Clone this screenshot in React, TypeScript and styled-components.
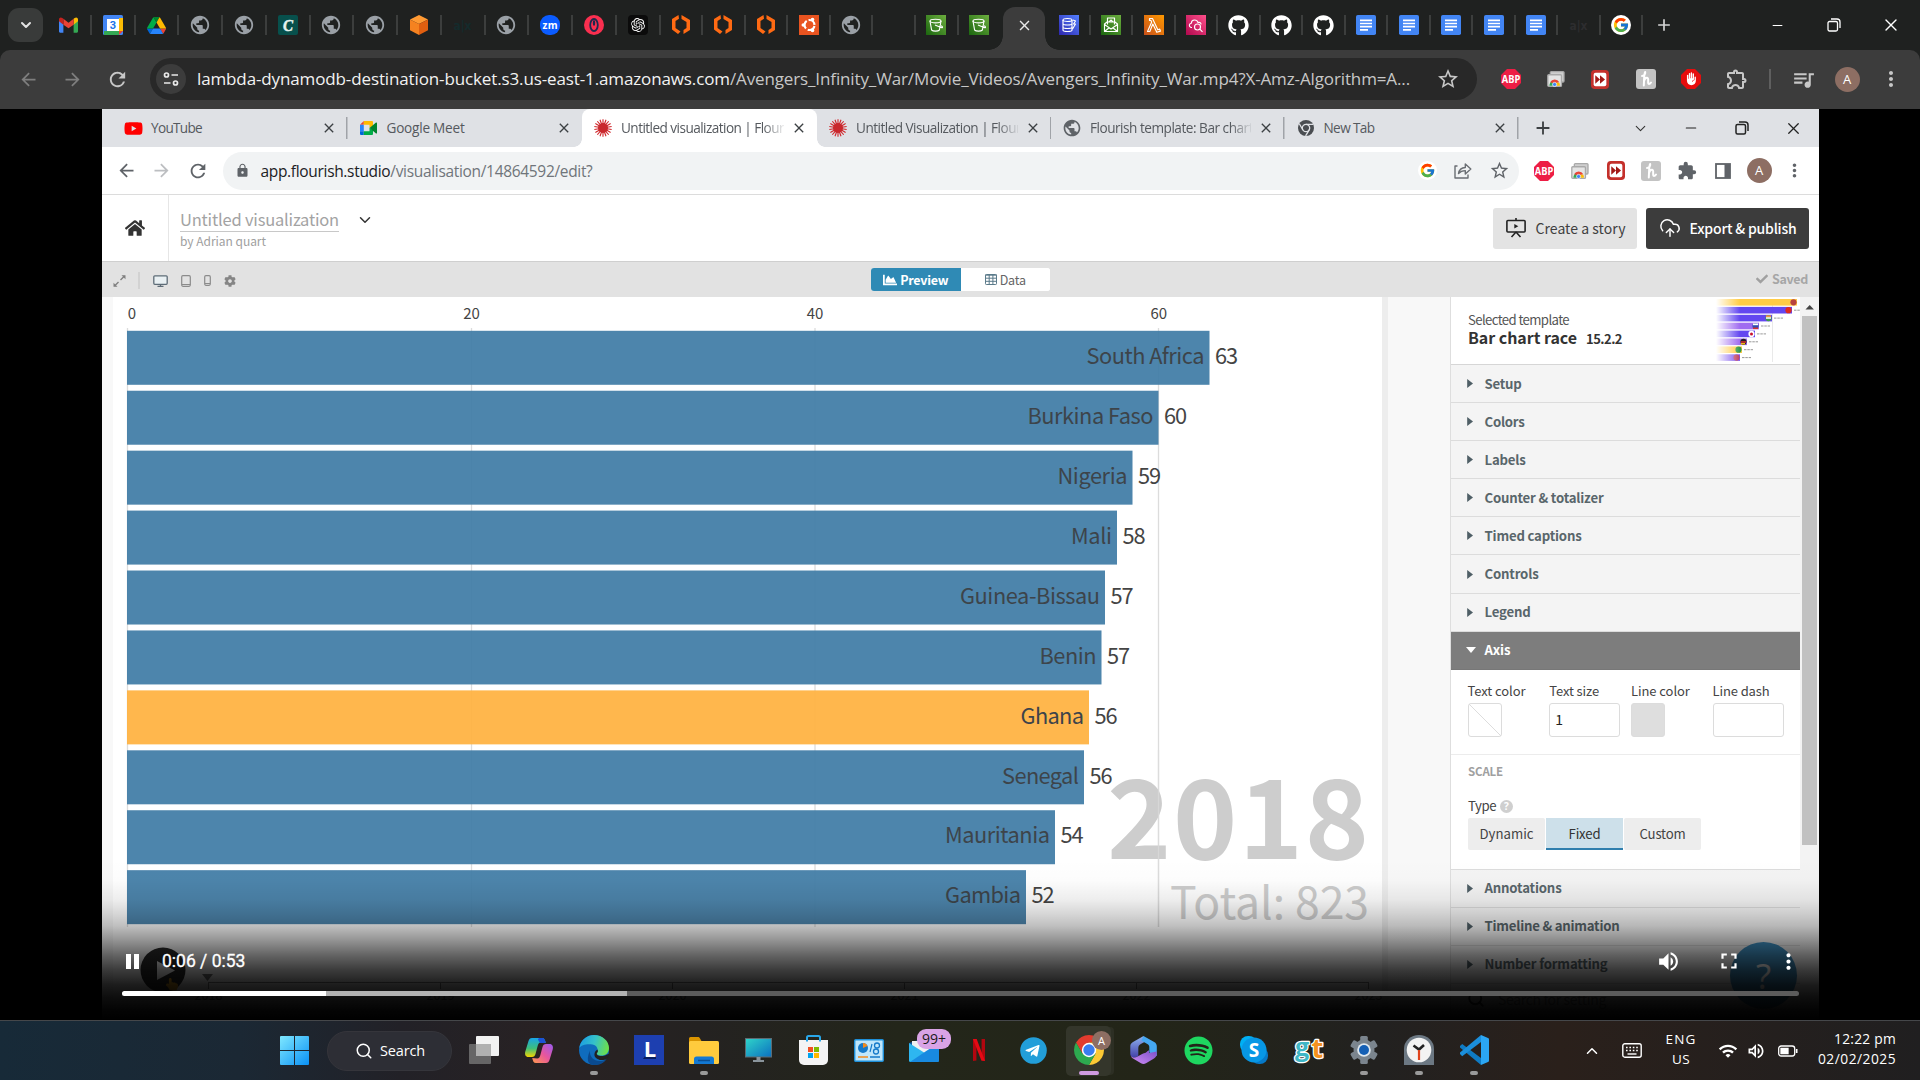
import React, { useLayoutEffect, useRef, useState } from "react";
import styled, { createGlobalStyle, css } from "styled-components";
import { MdPublic, MdStarBorder, MdOutlineExtension, MdExtension, MdQueueMusic, MdVolumeUp, MdFullscreen, MdMoreVert, MdLock, MdArrowBack, MdArrowForward, MdRefresh, MdClose, MdAdd, MdWifi, MdOutlineVolumeUp, MdFrontHand } from "react-icons/md";
import { FaGithub, FaSpotify, FaTelegramPlane, FaHome, FaCog, FaChartArea, FaCheck, FaYoutube, FaHandPointUp } from "react-icons/fa";
import { FcGoogle } from "react-icons/fc";
import { SiOpenai } from "react-icons/si";
import { ChevronDown, ChevronUp, CloudUpload, Search, Minus, X } from "lucide-react";

const SANS = '"Open Sans", "Noto Sans", sans-serif';
const SOURCE = '"Noto Sans CJK SC", "Noto Sans", sans-serif';

const Global = createGlobalStyle`
  * { box-sizing: border-box; }
  html, body { margin: 0; padding: 0; background: #000; }
  body { width: 1920px; height: 1080px; overflow: hidden; font-family: ${SANS}; }
  svg { display: block; flex: none; overflow: visible; }
`;

/* ---------- text ---------- */

const Label = styled.span<{ $size: number; $color: string; $bold?: number; $source?: boolean; $lift?: number }>`
  display: inline-block;
  flex: none;
  width: max-content;
  white-space: nowrap;
  font-family: ${(p) => (p.$source ? SOURCE : SANS)};
  font-size: ${(p) => p.$size}px;
  font-weight: ${(p) => p.$bold ?? 400};
  line-height: 20px;
  color: ${(p) => p.$color};
  margin-bottom: ${(p) => p.$lift ?? 0}px;
`;

type TextProps = {
  width: number;
  size: number;
  color: string;
  bold?: number;
  source?: boolean;
  lift?: number;
  children: React.ReactNode;
};

/* Tracks its letters so that the line spans the given width. */
function Text({ width, size, color, bold, source, lift, children }: TextProps) {
  const ref = useRef<HTMLSpanElement>(null);
  const [spacing, setSpacing] = useState(0);
  useLayoutEffect(() => {
    const el = ref.current;
    if (!el) return;
    el.style.letterSpacing = "0px";
    const natural = el.getBoundingClientRect().width;
    const count = (el.textContent ?? "").length || 1;
    const next = (width - natural) / count;
    el.style.letterSpacing = `${next}px`;
    setSpacing(next);
  }, [width, size]);
  return (
    <Label ref={ref} $size={size} $color={color} $bold={bold} $source={source} $lift={lift} style={{ letterSpacing: spacing }}>
      {children}
    </Label>
  );
}

/* ---------- outer browser ---------- */

const Desktop = styled.div`
  display: flex;
  flex-direction: column;
  width: 1920px;
  height: 1080px;
  background: #000;
`;

const TabStrip = styled.div`
  display: flex;
  align-items: center;
  height: 50px;
  background: #1f2120;
`;

const TabSearch = styled.div`
  display: flex;
  align-items: center;
  justify-content: center;
  width: 35px;
  height: 34px;
  margin: 0 5px 0 8px;
  border-radius: 11px;
  background: #393b3a;
  color: #e3e3e3;
`;

const TabCell = styled.div<{ $w: number; $line?: boolean }>`
  display: flex;
  flex: none;
  align-items: center;
  justify-content: center;
  width: ${(p) => p.$w}px;
  height: 20px;
  border-right: 2px solid ${(p) => (p.$line === false ? "transparent" : "#3c3e3d")};
`;

const ActiveTab = styled.div`
  display: flex;
  flex: none;
  align-self: flex-end;
  align-items: center;
  justify-content: center;
  position: relative;
  width: 42px;
  height: 43px;
  margin: 0 3px 0 2px;
  border-radius: 12px 12px 0 0;
  background: #3c3c3c;
  color: #e8e8e8;
  padding-bottom: 7px;
  &::before, &::after {
    content: "";
    position: absolute;
    bottom: 0;
    width: 14px;
    height: 14px;
  }
  &::before { left: -14px; background: radial-gradient(circle at 0 0, transparent 13.5px, #3c3c3c 14px); }
  &::after { right: -14px; background: radial-gradient(circle at 100% 0, transparent 13.5px, #3c3c3c 14px); }
`;

const WindowButtons = styled.div`
  display: flex;
  align-items: center;
  margin-left: auto;
  color: #fff;
`;

const Slot = styled.div<{ $w: number; $color?: string }>`
  display: flex;
  flex: none;
  align-items: center;
  justify-content: center;
  width: ${(p) => p.$w}px;
  color: ${(p) => p.$color ?? "inherit"};
`;

const ToolbarBack = styled.div`
  height: 59px;
  background: #1f2120;
`;

const Toolbar = styled.div`
  display: flex;
  align-items: center;
  height: 59px;
  padding: 0 6px 1px 6px;
  border-radius: 10px 10px 0 0;
  background: #3c3c3c;
  color: #c7c7c7;
`;

const Omnibox = styled.div`
  display: flex;
  align-items: center;
  width: 1327px;
  height: 42px;
  margin-left: 10px;
  padding: 0 14px 0 6px;
  border-radius: 21px;
  background: #282828;
`;

const SiteInfo = styled.div`
  display: flex;
  align-items: center;
  justify-content: center;
  width: 30px;
  height: 30px;
  margin-right: 11px;
  border-radius: 50%;
  background: #3c3c3c;
`;

const Dim = styled.span<{ $c: string }>`
  color: ${(p) => p.$c};
`;

const Push = styled.div`
  margin-left: auto;
`;

const Avatar = styled.div`
  display: flex;
  align-items: center;
  justify-content: center;
  width: 25px;
  height: 25px;
  border-radius: 50%;
  background: #8d6e63;
  color: #fff;
  font: 400 13px/25px ${SANS};
`;

const Divider = styled.div<{ $h: number; $c: string }>`
  width: 2px;
  height: ${(p) => p.$h}px;
  background: ${(p) => p.$c};
`;

/* ---------- video ---------- */

const Stage = styled.div`
  display: flex;
  justify-content: flex-start;
  height: 911px;
  padding-left: 102px;
  background: #000;
`;

const Video = styled.div`
  position: relative;
  display: flex;
  flex-direction: column;
  width: 1717px;
  height: 911px;
  background: #fff;
  overflow: hidden;
`;

const InnerStrip = styled.div`
  display: flex;
  height: 38px;
  padding-left: 10px;
  background: #dfe1e5;
`;

const InnerTab = styled.div<{ $w: number; $active?: boolean; $line?: boolean }>`
  display: flex;
  flex: none;
  align-items: center;
  position: relative;
  width: ${(p) => p.$w}px;
  padding: 0 10.5px 0 10px;
  gap: 7px;
  color: #3c4043;
  ${(p) => p.$line && css`background: linear-gradient(#a0a3a8, #a0a3a8) right center / 1.5px 22px no-repeat;`}
  ${(p) =>
    p.$active &&
    css`
      background: #fff;
      border-radius: 8px 8px 0 0;
      &::before, &::after { content: ""; position: absolute; bottom: 0; width: 8px; height: 8px; }
      &::before { left: -8px; background: radial-gradient(circle at 0 0, transparent 7.5px, #fff 8px); }
      &::after { right: -8px; background: radial-gradient(circle at 100% 0, transparent 7.5px, #fff 8px); }
    `}
`;

const TabTitle = styled.div<{ $fade?: boolean }>`
  display: flex;
  flex: 1;
  min-width: 0;
  ${(p) => p.$fade && css`mask-image: linear-gradient(90deg, #000 87%, rgba(0, 0, 0, 0.1) 100%);`}
`;

const InnerBar = styled.div`
  display: flex;
  align-items: center;
  height: 48px;
  padding: 0 7px;
  border-bottom: 1px solid #dcdcdc;
  color: #5f6368;
`;

const InnerOmnibox = styled.div`
  display: flex;
  align-items: center;
  width: 1296px;
  height: 38px;
  margin-left: 7px;
  margin-right: 7px;
  padding: 0 2px 0 9px;
  border-radius: 19px;
  background: #f1f3f4;
`;

const Header = styled.div`
  display: flex;
  align-items: center;
  height: 67px;
  padding-right: 10px;
  border-bottom: 1px solid #cfcfcf;
  background: #fff;
`;

const HomeCell = styled.div`
  display: flex;
  align-items: center;
  justify-content: center;
  width: 67px;
  height: 66px;
  border-right: 1px solid #e6e6e6;
  color: #333;
`;

const TitleBlock = styled.div`
  display: flex;
  flex-direction: column;
  align-items: flex-start;
  align-self: flex-start;
  margin-left: 11px;
  margin-right: 17px;
  padding-top: 13.5px;
`;

const TitleLine = styled.div`
  flex: none;
  height: 23px;
  margin-bottom: -1px;
  border-bottom: 1px solid #c8c8c8;
`;

const TitleMenu = styled.div`
  padding-bottom: 16px;
  color: #333;
`;

const HeaderButton = styled.div<{ $w: number; $dark?: boolean }>`
  display: flex;
  align-items: center;
  gap: ${(p) => (p.$dark ? 9 : 10)}px;
  width: ${(p) => p.$w}px;
  height: 41px;
  padding-left: 12.5px;
  border-radius: 3px;
  background: ${(p) => (p.$dark ? "#3c3c3c" : "#e3e3e3")};
  color: ${(p) => (p.$dark ? "#fff" : "#333")};
`;

const ButtonRow = styled.div`
  display: flex;
  gap: 9px;
  margin-left: auto;
`;

const SubBar = styled.div`
  display: grid;
  grid-template-columns: 769px 179px 1fr;
  align-items: center;
  height: 35px;
  background: #e2e2e2;
  color: #858585;
`;

const SubLeft = styled.div`
  display: flex;
  align-items: center;
  padding: 2px 0 0 6px;
`;

const Switch = styled.div`
  display: flex;
  height: 23px;
  border-radius: 3px;
  overflow: hidden;
  background: #fff;
`;

const SwitchHalf = styled.div<{ $on?: boolean }>`
  display: flex;
  align-items: center;
  justify-content: center;
  gap: 3px;
  width: 50%;
  background: ${(p) => (p.$on ? "#2f8ab5" : "#fff")};
  color: ${(p) => (p.$on ? "#fff" : "#5b7a8a")};
`;

const SavedCell = styled.div`
  display: flex;
  align-items: center;
  justify-content: flex-end;
  gap: 4px;
  padding-right: 11px;
  padding-bottom: 1px;
  color: #a0a0a0;
`;

const Body = styled.div`
  display: flex;
  height: 723px;
  background: #f8f8f8;
`;

const Margin = styled.div<{ $w: number; $c: string }>`
  flex: none;
  width: ${(p) => p.$w}px;
  background: ${(p) => p.$c};
`;

const ChartPane = styled.div`
  width: 1269px;
  background: #fff;
`;

const Sidebar = styled.div`
  display: flex;
  flex-direction: column;
  width: 350px;
  border-left: 1px solid #dedede;
  background: #fff;
`;

const TemplateCard = styled.div`
  display: flex;
  flex: none;
  justify-content: space-between;
  height: 68px;
  padding-left: 17px;
  border-bottom: 1px solid #d6d6d6;
`;

const TemplateText = styled.div`
  display: flex;
  flex-direction: column;
  padding-top: 12.5px;
`;

const TitlePair = styled.div`
  display: flex;
  align-items: baseline;
  gap: 9px;
  margin-top: -3px;
`;

const Section = styled.div<{ $open?: boolean }>`
  display: flex;
  flex: none;
  align-items: center;
  gap: 8.5px;
  height: 38.1px;
  padding-left: 15px;
  border-bottom: 1px solid ${(p) => (p.$open ? "#777" : "#dcdcdc")};
  background: ${(p) => (p.$open ? "#7d7d7d" : "#f4f4f4")};
`;

const Fields = styled.div`
  display: grid;
  grid-template-columns: repeat(4, 81.7px);
  flex: none;
  height: 85.5px;
  padding: 11.5px 0 0 16.5px;
  border-bottom: 1px solid #ececec;
`;

const Field = styled.div`
  display: flex;
  flex-direction: column;
  gap: 1.5px;
`;

const Swatch = styled.div<{ $fill?: string }>`
  width: 34px;
  height: 34px;
  border: 1px solid #dcdcdc;
  border-radius: 3px;
  background: ${(p) => p.$fill ?? "linear-gradient(45deg, #fff 49.2%, #ddd 49.5%, #ddd 50.5%, #fff 50.8%)"};
`;

const Input = styled.div`
  display: flex;
  align-items: center;
  width: 71px;
  height: 34px;
  padding-left: 5px;
  padding-bottom: 1px;
  border: 1px solid #dcdcdc;
  border-radius: 3px;
  background: #fff;
`;

const Scale = styled.div`
  display: flex;
  flex: none;
  flex-direction: column;
  height: 114.5px;
  padding: 6px 0 0 17px;
  border-bottom: 1px solid #dcdcdc;
`;

const TypeLine = styled.div`
  display: flex;
  align-items: center;
  gap: 4px;
  margin: 15px 0 2px;
`;

const Question = styled.div`
  width: 13px;
  height: 13px;
  border-radius: 50%;
  background: #cfcfcf;
  color: #fff;
  font: 700 10px/13px ${SANS};
  text-align: center;
`;

const Options = styled.div`
  display: flex;
  gap: 1px;
`;

const Option = styled.div<{ $on?: boolean }>`
  display: flex;
  align-items: center;
  justify-content: center;
  width: 77px;
  height: 32px;
  padding-bottom: 1px;
  border-radius: ${(p) => (p.$on ? 0 : "2px")};
  background: ${(p) => (p.$on ? "#cde0ea" : "#ededed")};
  box-shadow: ${(p) => (p.$on ? "inset 0 -2px 0 #2f7fae" : "none")};
`;

const SearchLine = styled.div`
  display: flex;
  align-items: center;
  gap: 13px;
  height: 30px;
  padding-left: 16px;
`;

const ScrollTrack = styled.div`
  display: flex;
  flex-direction: column;
  align-items: flex-start;
  width: 19px;
  padding: 7px 0 0 2px;
  background: #f3f3f3;
`;

const ScrollThumb = styled.div`
  width: 15px;
  height: 529px;
  margin-top: 6px;
  background: #c1c1c1;
`;

const HelpBubble = styled.div`
  position: absolute;
  right: 22px;
  bottom: 11px;
  display: flex;
  align-items: center;
  justify-content: center;
  width: 67px;
  height: 67px;
  border-radius: 50%;
  background: #3f8fc0;
  color: #fff;
  font: 400 35px/67px ${SANS};
`;

const Shade = styled.div`
  position: absolute;
  left: 0;
  right: 0;
  bottom: 0;
  height: 160px;
  background: linear-gradient(
    rgba(0, 0, 0, 0) 0px, rgba(0, 0, 0, 0.01) 20px, rgba(0, 0, 0, 0.07) 40px, rgba(0, 0, 0, 0.16) 54px,
    rgba(0, 0, 0, 0.25) 66px, rgba(0, 0, 0, 0.42) 80px, rgba(0, 0, 0, 0.62) 96px, rgba(0, 0, 0, 0.77) 110px,
    rgba(0, 0, 0, 0.89) 125px, rgba(0, 0, 0, 0.95) 138px, rgba(0, 0, 0, 0.985) 150px, #000 160px
  );
`;

const Controls = styled.div`
  position: absolute;
  left: 20px;
  right: 20px;
  bottom: 24px;
  display: flex;
  flex-direction: column;
  gap: 16px;
  color: #fff;
`;

const ControlRow = styled.div`
  display: flex;
  align-items: center;
  height: 28px;
`;

const Time = styled.div`
  margin-left: 20px;
  font: 400 17.5px/28px Roboto, "Liberation Sans", sans-serif;
  -webkit-text-stroke: 0.3px #fff;
`;

const Track = styled.div`
  display: flex;
  height: 5px;
  border-radius: 3px;
  overflow: hidden;
  background: #5c5c5c;
`;

const TrackPart = styled.div<{ $c: string }>`
  background: ${(p) => p.$c};
`;

/* ---------- taskbar ---------- */

const Taskbar = styled.div`
  display: flex;
  align-items: center;
  height: 60px;
  padding-left: 280px;
  border-top: 1px solid #45474a;
  background: linear-gradient(90deg, #172a38 0, #1b2834 240px, #222127 400px, #292223 560px, #242221 700px, #23261a 900px, #232518 1150px, #222120 1380px, #2a201b 1560px, #201f20 1920px);
`;

const SearchPill = styled.div`
  display: flex;
  align-items: center;
  gap: 7px;
  width: 125px;
  height: 40px;
  margin: 0 4px 0 18px;
  padding-left: 27px;
  border: 1px solid #35353b;
  border-radius: 20px;
  background: #2d2e35;
  color: #fff;
`;

const TaskItem = styled.div<{ $on?: boolean }>`
  position: relative;
  display: flex;
  flex: none;
  align-items: center;
  justify-content: center;
  width: ${(p) => (p.$on ? 45 : 55)}px;
  height: ${(p) => (p.$on ? 50 : 59)}px;
  margin: 0 ${(p) => (p.$on ? 5 : 0)}px;
  padding-bottom: 1px;
  border-radius: 5px;
  background: ${(p) => (p.$on ? "#34362b" : "transparent")};
  box-shadow: ${(p) => (p.$on ? "4px 0 0 -1px #2d2f24" : "none")};
`;

const Running = styled.div<{ $w: number; $c: string }>`
  position: absolute;
  bottom: ${(p) => (p.$w > 10 ? 1 : 5)}px;
  width: ${(p) => p.$w}px;
  height: 4px;
  border-radius: 2px;
  background: ${(p) => p.$c};
`;

const Badge = styled.div`
  position: absolute;
  top: 8px;
  left: 21px;
  width: 34px;
  height: 20px;
  border-radius: 9px;
  background: #d9a3e6;
  color: #1a1a1a;
  font: 400 14px/20px ${SANS};
  text-align: center;
`;

const Initial = styled.div`
  position: absolute;
  top: 5px;
  right: 0;
  width: 19px;
  height: 19px;
  border-radius: 50%;
  background: #8d6e63;
  color: #fff;
  font: 400 11px/19px ${SANS};
  text-align: center;
`;

const Tray = styled.div`
  display: flex;
  align-items: center;
  margin-left: auto;
  padding-right: 24px;
  color: #fff;
`;

const Stack = styled.div<{ $w: number; $end?: boolean }>`
  display: flex;
  flex-direction: column;
  align-items: ${(p) => (p.$end ? "flex-end" : "center")};
  width: ${(p) => p.$w}px;
  padding-bottom: 3px;
`;

/* ---------- icons ---------- */

const Gmail = () => (
  <svg width="19" height="16" viewBox="0 0 52 42">
    <path d="M0 6v33a3 3 0 0 0 3 3h9V18z" fill="#4285f4" />
    <path d="M40 18v24h9a3 3 0 0 0 3-3V6z" fill="#34a853" />
    <path d="M40 4v16l12-9V6c0-5-5-7-9-4z" fill="#fbbc04" />
    <path d="M12 20V4l14 10.500L40 4v16L26 30z" fill="#ea4335" />
    <path d="M0 6v5l12 9V4L9 2C5-1 0 1 0 6z" fill="#c5221f" />
  </svg>
);
const Calendar = () => (
  <svg width="20" height="20" viewBox="0 0 20 20">
    <rect width="20" height="20" rx="1.500" fill="#4285f4" />
    <rect x="16" y="3" width="4" height="13" fill="#fbbc04" />
    <rect x="1" y="16" width="15" height="4" fill="#34a853" />
    <path d="M16 16h4l-4 4z" fill="#ea4335" />
    <rect x="4" y="4" width="12" height="12" fill="#fff" />
    <text x="10" y="14" fontFamily="Roboto" fontSize="11" fontWeight="700" textAnchor="middle" fill="#1a73e8">3</text>
  </svg>
);
const Drive = () => (
  <svg width="19" height="17" viewBox="0 0 87 78">
    <path d="M6.600 66.850l3.850 6.650c.8 1.400 1.950 2.500 3.300 3.300L27.500 53H0c0 1.550.4 3.100 1.200 4.500z" fill="#0066da" />
    <path d="M43.650 25L29.900 1.200c-1.350.8-2.500 1.900-3.300 3.300l-25.400 44A9 9 0 0 0 0 53h27.500z" fill="#00ac47" />
    <path d="M73.550 76.800c1.350-.8 2.500-1.900 3.300-3.300l9.250-16c.8-1.400 1.200-2.950 1.200-4.500H59.800l5.850 11.500z" fill="#ea4335" />
    <path d="M43.650 25L57.400 1.200C56.050.4 54.500 0 52.900 0H34.400c-1.600 0-3.150.45-4.500 1.200z" fill="#00832d" />
    <path d="M59.800 53H27.500L13.750 76.800c1.350.8 2.900 1.200 4.500 1.200h50.800c1.600 0 3.150-.45 4.500-1.200z" fill="#2684fc" />
    <path d="M73.400 26.500l-12.700-22c-.8-1.400-1.950-2.500-3.300-3.300L43.650 25 59.800 53h27.450c0-1.550-.4-3.100-1.200-4.500z" fill="#ffba00" />
  </svg>
);
const Copper = () => (
  <svg width="20" height="20" viewBox="0 0 20 20">
    <rect width="20" height="20" rx="2" fill="#07504c" />
    <text x="10" y="15.500" fontFamily="Liberation Serif" fontStyle="italic" fontWeight="700" fontSize="17" textAnchor="middle" textLength="10" lengthAdjust="spacingAndGlyphs" stroke="#e6f4f0" strokeWidth=".5" fill="#e6f4f0">C</text>
  </svg>
);
const Cube = () => (
  <svg width="20" height="20" viewBox="0 0 20 20">
    <path d="M10 0l9 4.500L10 9 1 4.500z" fill="#ff9a33" />
    <path d="M1 4.500L10 9v11l-9-4.700z" fill="#f58220" />
    <path d="M19 4.500L10 9v11l9-4.700z" fill="#e05f10" />
  </svg>
);
const Alx = ({ c }: { c: string }) => (
  <svg width="19" height="16" viewBox="0 0 19 16">
    <text x="9.500" y="13" fontFamily="DejaVu Sans" fontWeight="700" fontSize="13" textLength="18" lengthAdjust="spacingAndGlyphs" textAnchor="middle" fill={c}>a|x</text>
  </svg>
);
const Zoom = () => (
  <svg width="20" height="20" viewBox="0 0 20 20">
    <rect width="20" height="20" rx="9" fill="#0b5cff" />
    <text x="10" y="13.500" fontFamily="Open Sans" fontWeight="700" fontSize="10" textAnchor="middle" textLength="15" fill="#fff">zm</text>
  </svg>
);
const Opera = () => (
  <svg width="20" height="20" viewBox="0 0 20 20">
    <circle cx="10" cy="10" r="10" fill="#fa2f4f" />
    <ellipse cx="10" cy="10" rx="3.800" ry="6" fill="none" stroke="#1c2a4d" strokeWidth="1.800" />
    <ellipse cx="10" cy="8" rx="1.200" ry="3" fill="#1c2a4d" />
  </svg>
);
const Gpt = () => (
  <svg width="20" height="20" viewBox="0 0 20 20">
    <rect width="20" height="20" rx="4" fill="#0b0b0b" />
    <g transform="translate(3 3)"><SiOpenai size={14} color="#fff" /></g>
  </svg>
);
const Brackets = () => (
  <svg width="20" height="20" viewBox="0 0 20 20" fill="#ff6a13">
    <path d="M7.500 0L1 4v10.500l6 4.500 2.500-2.500-5-3.500V6l3.500-2.200z" />
    <path d="M10.500 0L19 5v10l-6.500 4v-4l3-2V7l-5-3z" />
  </svg>
);
const Ubuntu = () => (
  <svg width="20" height="20" viewBox="0 0 20 20">
    <rect width="20" height="20" fill="#e95420" />
    <circle cx="10.500" cy="10" r="5" fill="none" stroke="#fff" strokeWidth="2.200" strokeDasharray="8.500 2" strokeDashoffset="-1" />
    <circle cx="4.300" cy="10" r="1.800" fill="#fff" />
    <circle cx="13.500" cy="4.600" r="1.800" fill="#fff" />
    <circle cx="13.500" cy="15.400" r="1.800" fill="#fff" />
  </svg>
);
const AwsTile = ({ a, b, id, children }: { a: string; b: string; id: string; children: React.ReactNode }) => (
  <svg width="20" height="20" viewBox="0 0 20 20">
    <defs>
      <linearGradient id={id} x1="0" y1="1" x2="1" y2="0"><stop stopColor={a} /><stop offset="1" stopColor={b} /></linearGradient>
    </defs>
    <rect width="20" height="20" fill={`url(#${id})`} />
    <g fill="none" stroke="#fff" strokeWidth="1.150" strokeLinejoin="round">{children}</g>
  </svg>
);
const Bucket = () => (
  <AwsTile a="#1b660f" b="#6cae3e" id="s3">
    <ellipse cx="9.500" cy="6" rx="5.500" ry="1.800" />
    <path d="M4 6l1.600 9c1.500 1.400 6.300 1.400 7.800 0L15 6M9 10l6 2.500c2 .6 2-1 0-1.800" />
  </AwsTile>
);
const Dynamo = () => (
  <AwsTile a="#2e27ad" b="#527fff" id="dy">
    <ellipse cx="8.500" cy="5" rx="4.500" ry="1.500" />
    <path d="M4 5v10c0 2 9 2 9 0V5M4 8.500c0 2 9 2 9 0M4 12c0 2 9 2 9 0M14 5l2.500 1-2 3h2l-3 5" />
  </AwsTile>
);
const Ses = () => (
  <AwsTile a="#1b660f" b="#6cae3e" id="se">
    <path d="M3.500 9l2.500-2h8l2.500 2v7.500h-13zM3.500 9.500l6.500 4.500 6.500-4.500M6.500 9.500V3h7v6.500M8 7l2-2 2 2M3.500 16.500l5-4M16.500 16.500l-5-4" />
  </AwsTile>
);
const Lambda = () => (
  <AwsTile a="#c8511b" b="#ff9900" id="la">
    <path d="M5.500 3.500h3l5.300 11.300 2-.7.600 2-3.600 1.200L8.800 9 5.800 16.500H3.500L7.700 7l-.8-1.600H5.500z" />
  </AwsTile>
);
const CloudWatch = () => (
  <AwsTile a="#b0084d" b="#ff4f8b" id="cw">
    <path d="M6 12.500H5c-2.500-1-2-4 .3-4.200C5.500 4 11 4 12 7.500c2.500-.5 3 .8 3 2" />
    <circle cx="11.500" cy="12" r="3" /><path d="M13.800 14.200l2.700 2.600" />
  </AwsTile>
);
const Docs = () => (
  <svg width="20" height="20" viewBox="0 0 20 20">
    <rect width="20" height="20" rx="1.800" fill="#4285f4" />
    <path d="M4 5.300h12M4 8.500h12M4 11.700h12M4 14.900h8" stroke="#fff" strokeWidth="1.700" />
  </svg>
);
const GoogleDisc = ({ s = 20 }: { s?: number }) => (
  <svg width={s} height={s} viewBox="0 0 20 20">
    <circle cx="10" cy="10" r="10" fill="#fff" />
    <g transform="translate(1.5 1.5)"><FcGoogle size={17} /></g>
  </svg>
);
const Restore = ({ c, w = 1.300 }: { c: string; w?: number }) => (
  <svg width="14" height="14" viewBox="0 0 14 14" fill="none" stroke={c} strokeWidth={w}>
    <rect x="1" y="3.500" width="9.500" height="9.500" rx="1.500" />
    <path d="M4 1h6a3 3 0 0 1 3 3v6" />
  </svg>
);
const Tune = () => (
  <svg width="16" height="16" viewBox="0 0 16 16" fill="none" stroke="#e8e8e8" strokeWidth="1.700">
    <circle cx="3.500" cy="4" r="2" /><path d="M8.500 4H15M1 12h6.500" /><circle cx="12.500" cy="12" r="2" />
  </svg>
);
const Abp = () => (
  <svg width="20" height="20" viewBox="0 0 20 20">
    <path d="M6 0h8l6 6v8l-6 6H6l-6-6V6z" fill="#ed1e45" />
    <text x="10" y="13.700" fontFamily="Open Sans" fontWeight="700" fontSize="10.200" textAnchor="middle" textLength="18.500" lengthAdjust="spacingAndGlyphs" fill="#fff">ABP</text>
  </svg>
);
const Windows = () => (
  <svg width="18" height="16" viewBox="0 0 19 17">
    <rect x="3.500" y=".7" width="14.500" height="11" rx="1" fill="#cfcfcf" stroke="#a9a9a9" strokeWidth="1.400" />
    <rect x=".8" y="4" width="14.500" height="12.300" rx="1" fill="#e4e4e4" stroke="#a9a9a9" strokeWidth="1.400" />
    <path d="M2.500 15.600a5.500 5.500 0 0 1 3-5l2.500 5z" fill="#34a853" />
    <path d="M3.200 12a5.500 5.500 0 0 1 9.800 0l-5 1.200z" fill="#ea4335" />
    <path d="M8 12.600h5a5.400 5.400 0 0 1 .6 3H8z" fill="#fbbc04" />
    <circle cx="8" cy="14.300" r="2.200" fill="#4285f4" stroke="#fff" strokeWidth=".7" />
  </svg>
);
const FastForward = () => (
  <svg width="18" height="19" viewBox="0 0 19 20">
    <rect width="19" height="20" rx="4" fill="#c4302b" />
    <rect x="2.800" y="3" width="13.400" height="14" rx="2" fill="#fff" />
    <path d="M4.500 5.500L9.500 10l-5 4.500zM9.500 5.500l5.300 4.500-5.300 4.500z" fill="#a31916" />
  </svg>
);
const Honey = () => (
  <svg width="20" height="20" viewBox="0 0 20 20">
    <rect width="20" height="20" rx="3" fill="#c3c3c3" />
    <path d="M6 7c2.300-.5 3.500-2 3.200-4-1.300 1.500-1 8-1.400 13.500M8 12c.6-2 1.700-3.500 3.200-3.300 2.200.3-.2 6.300 1.800 6.300.8 0 1.500-.7 2-1.500" fill="none" stroke="#fff" strokeWidth="2" strokeLinecap="round" strokeLinejoin="round" />
  </svg>
);
const StopHand = () => (
  <svg width="20" height="20" viewBox="0 0 20 20">
    <path d="M6 0h8l6 6v8l-6 6H6l-6-6V6z" fill="#e60d0d" />
    <g transform="translate(3.500 3.200)"><MdFrontHand size={13} color="#fff" /></g>
  </svg>
);
const Meet = () => (
  <svg width="17" height="14" viewBox="0 0 17 14">
    <path d="M3.800 0v3.800H0z" fill="#ea4335" />
    <path d="M0 3.800h3.800v6.400H0z" fill="#2684fc" />
    <path d="M0 10.200h3.800V14H1a1 1 0 0 1-1-1z" fill="#0066da" />
    <path d="M3.800 0H12a1 1 0 0 1 1 1v4l-3.500 2V3.800H3.800z" fill="#ffba00" />
    <path d="M3.800 14H12a1 1 0 0 0 1-1V9L9.500 7v3.200H3.800z" fill="#00ac47" />
    <path d="M9.500 7L16 1.500c.4-.3 1 0 1 .5v10c0 .5-.6.800-1 .5z" fill="#00832d" />
  </svg>
);
const Burst = () => (
  <svg width="18" height="18" viewBox="-9 -9 18 18">
    {Array.from({ length: 18 }, (_, i) => (
      <path key={i} d="M0-4V-8.800" stroke="#d0262b" strokeWidth="1.100" transform={`rotate(${i * 20})`} />
    ))}
    <circle r="5" fill="#c9282d" />
  </svg>
);
const ChromeGrey = () => (
  <svg width="16" height="16" viewBox="-8 -8 16 16">
    <circle r="8" fill="#4a4d51" />
    <circle r="3.700" fill="none" stroke="#dfe1e5" strokeWidth="1.300" />
    <path d="M0-3.700h7.200M-3.200 1.800l-3.500-6.100M3.200 1.800L-.4 7.900" stroke="#dfe1e5" strokeWidth="1.300" />
  </svg>
);
const Share = () => (
  <svg width="18" height="17" viewBox="0 0 18 17" fill="none" stroke="#6a6e73" strokeWidth="1.400" strokeLinejoin="round">
    <path d="M3.500 4H1v12h13v-3.500" />
    <path d="M4.500 11.500c.7-4 3-5.800 6.800-6V2l5.500 5-5.500 5V8.600c-3 0-5 .8-6.800 2.900z" />
  </svg>
);
const SidePanel = () => (
  <svg width="16" height="16" viewBox="0 0 16 16">
    <rect x="1" y="1" width="14" height="14" fill="none" stroke="#5f6368" strokeWidth="1.800" />
    <rect x="9.500" y="1" width="5.500" height="14" fill="#5f6368" />
  </svg>
);
const Presentation = () => (
  <svg width="20" height="20" viewBox="0 0 20 20" fill="none" stroke="#222" strokeWidth="1.600">
    <rect x=".9" y="2.500" width="18.200" height="11.500" rx="1" />
    <path d="M10 0v2.500M10 14l-4.500 5M10 14l4.500 5" />
    <path d="M8.300 6v4.500l4-2.250z" fill="#222" stroke="none" />
  </svg>
);
const Expand = () => (
  <svg width="13" height="12" viewBox="0 0 13 12" fill="none" stroke="#808080" strokeWidth="1.400">
    <path d="M7.500 5L11.500 1M1.500 11l4-4" />
    <path d="M8.500.3h4v4zM.5 7.700v4h4z" fill="#808080" stroke="none" />
  </svg>
);
const Monitor = () => (
  <svg width="15" height="12" viewBox="0 0 15 12" fill="none" stroke="#5e6c77" strokeWidth="1.300">
    <rect x=".8" y=".8" width="13.400" height="8.500" rx="1" fill="#e9f0f3" /><path d="M4.500 11.300h6M7.500 9v2" />
  </svg>
);
const Device = ({ w, h }: { w: number; h: number }) => (
  <svg width={w} height={h} viewBox={`0 0 ${w} ${h}`} fill="none" stroke="#8b8b8b" strokeWidth="1.200">
    <rect x=".7" y=".7" width={w - 1.400} height={h - 1.400} rx="1.200" /><path d={`M1 ${h - 2.500}h${w - 2}`} strokeWidth="1" />
  </svg>
);
const DataGrid = () => (
  <svg width="12" height="11" viewBox="0 0 12 11" fill="none" stroke="#5b7a8a" strokeWidth="1">
    <rect x=".5" y=".5" width="11" height="10" rx=".8" />
    <path d="M0 1.200h12M.5 4.200h11M.5 7.300h11M4.200 1v9.500M7.900 1v9.500" />
  </svg>
);
const Caret = ({ down }: { down?: boolean }) =>
  down ? (
    <svg width="10" height="6" viewBox="0 0 10 6"><path d="M0 0h10L5 6z" fill="#fff" /></svg>
  ) : (
    <svg width="10" height="9" viewBox="0 0 10 9"><path d="M1.200 0l5.800 4.500L1.200 9z" fill="#4f5f66" /></svg>
  );
const ScrollArrow = () => (
  <svg width="16" height="6" viewBox="0 0 16 6"><path d="M3.500 5.500L7.700 1l4.200 4.500z" fill="#444" /></svg>
);

const RACE = [
  [81, "#ffcc45", "#b8433f"], [76, "#6347f0", "#e02a1e"], [56, "#6347f0", "#3f9a48"], [43, "#a06cf0", "#2f4fb0"],
  [39, "#6347f0", "#fff"], [31, "#a06cf0", "#222"], [26, "#ffcc45", "#2f9a48"], [24, "#7d55ee", "#c04060"],
] as const;
const Thumbnail = () => (
  <svg width="84" height="67" viewBox="0 0 84 67">
    <defs><linearGradient id="fade"><stop stopColor="#fff" /><stop offset="1" stopColor="#fff" stopOpacity="0" /></linearGradient></defs>
    <path d="M56.500 2v63" stroke="#e3e3e3" strokeWidth=".8" />
    {RACE.map(([w, c, f], i) => (
      <g key={i}>
        <rect x="0" y={2 + i * 7.900} width={w} height="6.600" fill={c} />
        <circle cx={w - 3.500} cy={5.300 + i * 7.900} r="3.100" fill={f} />
        {i === 4 && <circle cx={w - 3.500} cy={5.300 + i * 7.900} r="1.500" fill="#c8102e" />}
        {i === 2 && <path d={`M${w - 6} 19.300h5`} stroke="#f3914a" strokeWidth="1.800" />}
        {i === 2 && <path d={`M${w - 6} 21h5`} stroke="#fff" strokeWidth="1.500" />}
        {i === 3 && <path d={`M${w - 6} 27.300h5`} stroke="#fff" strokeWidth="1.800" />}
        {i === 3 && <path d={`M${w - 6} 31.300h5`} stroke="#d8332e" strokeWidth="1.500" />}
        {i === 5 && <path d={`M${w - 6} 45h5`} stroke="#e0322c" strokeWidth="1.500" />}
        {i === 5 && <path d={`M${w - 6} 46.800h4`} stroke="#f5c518" strokeWidth="1.500" />}
        {i > 0 && <path d={`M${w + 2} ${5.300 + i * 7.900}h${i === 1 ? 6 : 9}`} stroke="#999" strokeWidth="1" strokeDasharray="2.500 .8" />}
      </g>
    ))}
    <rect width="24" height="67" fill="url(#fade)" />
  </svg>
);

/* ---------- chart ---------- */

const COUNTRIES: [string, number, number, number][] = [
  ["South Africa", 63, 1209.5, 118],
  ["Burkina Faso", 60, 1158.500, 126],
  ["Nigeria", 59, 1132.500, 70],
  ["Mali", 58, 1117, 41],
  ["Guinea-Bissau", 57, 1105, 140],
  ["Benin", 57, 1101.500, 57],
  ["Ghana", 56, 1089, 63.500],
  ["Senegal", 56, 1084, 77],
  ["Mauritania", 54, 1055, 105],
  ["Gambia", 52, 1026, 76],
];
const AXIS = [[0, 132, 127.500], [20, 471.500, 471.500], [40, 815, 815], [60, 1158.800, 1158.500]];
const YEARS = [2018, 2019, 2020, 2021, 2022, 2023];

function Chart() {
  return (
    <svg width="1269" height="723" viewBox="113 297 1269 723" fontFamily={SOURCE}>
      {AXIS.map(([v, x]) => (
        <text key={v} x={x} y="318.500" fontSize="15" textAnchor="middle" fill="#444">{v}</text>
      ))}
      {AXIS.map(([v, , x]) => (
        <path key={v} d={`M${x} 328v599`} stroke="#dcdcdc" strokeWidth="1.300" />
      ))}
      {COUNTRIES.map(([name, value, end, w], i) => {
        const y = 330.800 + i * 59.930;
        return (
          <g key={name}>
            <rect x="127" y={y} width={end - 127} height="54" fill={name === "Ghana" ? "#ffb13f" : "#3f7ca6"} fillOpacity=".93" />
            <text x={end - 5} y={y + 33.200} fontSize="21.800" textAnchor="end" textLength={w} fill="#3d444a">{name}</text>
            <text x={end + 5.500} y={y + 33.200} fontSize="21.800" textLength="23" fill="#444">{value}</text>
          </g>
        );
      })}
      <text x="1107" y="859" fontSize="109" fontWeight="700" textLength="262" fill="#cdcdcd">2018</text>
      <text x="1170" y="919" fontSize="44.500" textLength="199" fill="#cdcdcd">Total: 823</text>
      <path d="M1158.500 750v177" stroke="#dcdcdc" strokeOpacity=".7" strokeWidth="1.300" />
      <circle cx="163" cy="970" r="22.500" fill="#2b2b2b" />
      <path d="M157 961v19l18-9.500z" fill="#fff" />
      <path d="M202 974h11l-5.500 7z" fill="#777" />
      <path d="M208 982.500h1160" stroke="#8c8c8c" strokeWidth="1" />
      {YEARS.map((yr, i) => (
        <g key={yr}>
          <path d={`M${208.500 + i * 232} 982v7`} stroke="#8c8c8c" strokeWidth="1" />
          <text x={208.500 + i * 232} y="1000" fontSize="12.500" textAnchor="middle" fill="#666">{yr}</text>
        </g>
      ))}
      <g transform="translate(164 978)"><FaHandPointUp size={16} color="#e0a020" /></g>
    </svg>
  );
}

/* ---------- taskbar icons ---------- */

const Start = () => (
  <svg width="29" height="29" viewBox="0 0 29 29">
    <defs><linearGradient id="st" x1="0" y1="0" x2="1" y2="1"><stop stopColor="#7fe8ff" /><stop offset="1" stopColor="#0a91f5" /></linearGradient></defs>
    <path d="M0 1a1 1 0 0 1 1-1h13v14H0zM15 0h13a1 1 0 0 1 1 1v13H15zM0 15h14v14H1a1 1 0 0 1-1-1zM15 15h14v13a1 1 0 0 1-1 1H15z" fill="url(#st)" />
  </svg>
);
const TaskView = () => (
  <svg width="30" height="28" viewBox="0 0 30 28">
    <rect x="7" y="0" width="23" height="20" rx="1" fill="#f2f2f2" />
    <rect x="0" y="8" width="22" height="20" rx="1" fill="#777" fillOpacity=".8" />
    <rect x="7" y="8" width="15" height="12" fill="#b0b0b0" />
  </svg>
);
const Copilot = () => (
  <svg width="28" height="27" viewBox="0 0 28 27">
    <defs>
      <linearGradient id="c1" x1="0" y1="0" x2="0" y2="1"><stop stopColor="#18a5e8" /><stop offset=".55" stopColor="#3fbf7a" /><stop offset="1" stopColor="#f5d400" /></linearGradient>
      <linearGradient id="c2" x1="1" y1="0" x2="0" y2="1"><stop stopColor="#9a5bf0" /><stop offset=".5" stopColor="#e8569c" /><stop offset="1" stopColor="#ff9a4d" /></linearGradient>
    </defs>
    <path d="M7 1h10c2.500 0 3 2 3.800 5l-5-.5c-2 0-2.600 1.500-3.300 4L10.500 17c-.6 2-1.500 3-3.500 3H3.500C.5 20-.5 17.500.3 14.500L3.500 4C4.200 2 5 1 7 1z" fill="url(#c1)" />
    <path d="M15 1h2.500c2 0 2.700 2 3.300 5h-5.300c-1 0-1.700-2-2.500-3.500C13 1.500 14 1 15 1z" fill="#1b52d6" />
    <path d="M21 26H11c-2.500 0-3-2-3.800-5l5 .5c2 0 2.600-1.500 3.300-4l2-7.500c.6-2 1.500-3 3.500-3h3.500c3 0 4 2.500 3.200 5.500L24.500 23c-.7 2-1.500 3-3.500 3z" fill="url(#c2)" />
  </svg>
);
const Edge = () => (
  <svg width="30" height="30" viewBox="0 0 30 30">
    <defs>
      <linearGradient id="e1" x1="0" y1=".3" x2="1" y2=".5"><stop stopColor="#1b9de2" /><stop offset=".5" stopColor="#35c1c9" /><stop offset="1" stopColor="#6de04a" /></linearGradient>
    </defs>
    <circle cx="15" cy="15" r="15" fill="#0f6cbd" />
    <path d="M.3 13C1.500 5.500 7.500 0 15 0c8.500 0 15 6 15 13 0 5-3.500 7.500-7.500 7.500-3.500 0-5.500-1.300-4.500-3 1.600-2.500.5-7-4.500-8C8 8.500 2 10 .3 13z" fill="url(#e1)" />
    <path d="M11 15.500c-1 6 4 11 11 10.500 2.500-.2 4.500-1 6-2.500-3 5-8 6.800-13 6.500C6 29.500 9 20 11 15.500z" fill="#0a4a8f" />
    <path d="M18.500 14.500c1.500 3.500-1.500 3-.5 5 1 1.700 6 2.500 10 0 .8-.4 2.500-.8 2.500.3-1 3.500-3 4.500-5 4.900-4 1-7-.1-9-2.200-2-2.500-1-6.500 2-8z" fill="#232021" />
  </svg>
);
const Ledger = () => (
  <svg width="30" height="30" viewBox="0 0 30 30">
    <rect width="30" height="30" fill="#1d3fb0" />
    <path d="M9 24l2-3 11 0v3z" fill="#0a1e60" />
    <text x="16" y="22" fontFamily="Open Sans" fontWeight="700" fontSize="22" textAnchor="middle" fill="#fff">L</text>
  </svg>
);
const Folder = () => (
  <svg width="30" height="27" viewBox="0 0 30 27">
    <path d="M0 1.500A1.500 1.500 0 0 1 1.500 0H9c1 0 1.500.5 2 1.500L12.500 4V9H0z" fill="#d99400" />
    <rect x="0" y="4" width="30" height="23" rx="1.500" fill="#ffcb3d" />
    <path d="M5 27v-5a2.500 2.500 0 0 1 2.500-2.500h15A2.500 2.500 0 0 1 25 22v5z" fill="#1379d3" />
    <path d="M9 23.500h12" stroke="#0a4f94" strokeWidth="1.500" />
  </svg>
);
const Pc = () => (
  <svg width="27" height="24" viewBox="0 0 27 24">
    <defs><linearGradient id="pc" x1="0" y1="0" x2="1" y2="1"><stop stopColor="#2fd5c9" /><stop offset="1" stopColor="#0b6fc0" /></linearGradient></defs>
    <rect x=".5" y=".5" width="26" height="18.500" fill="url(#pc)" stroke="#5d6b73" />
    <path d="M11.500 19h4v3h-4zM8 22h11v2H8z" fill="#8a949b" />
  </svg>
);
const Store = () => (
  <svg width="29" height="30" viewBox="0 0 29 30">
    <path d="M8 8V2.500A1.500 1.500 0 0 1 9.500 1h10A1.500 1.500 0 0 1 21 2.500V8" fill="none" stroke="#29a8ea" strokeWidth="2" />
    <path d="M0 5h29v20a5 5 0 0 1-5 5H5a5 5 0 0 1-5-5z" fill="#f4f4f4" />
    <path d="M7 6.500V3h2v3.500zM20 6.500V3h2v3.500z" fill="#29a8ea" />
    <path d="M9 12h5v5H9z" fill="#f25022" /><path d="M15 12h5v5h-5z" fill="#7fba00" />
    <path d="M9 18h5v5H9z" fill="#00a4ef" /><path d="M15 18h5v5h-5z" fill="#ffb900" />
  </svg>
);
const ControlPanel = () => (
  <svg width="30" height="23" viewBox="0 0 30 23">
    <rect x=".7" y=".7" width="28.600" height="21.600" rx="1" fill="#bfe6fb" stroke="#1e8fd8" strokeWidth="1.400" />
    <circle cx="9" cy="9" r="5" fill="#1479c9" /><path d="M9 9V4a5 5 0 0 1 4.500 3z" fill="#f28a1c" />
    <circle cx="23" cy="6.500" r="2.500" fill="none" stroke="#1479c9" strokeWidth="1.300" /><circle cx="22" cy="12.500" r="2.500" fill="none" stroke="#1479c9" strokeWidth="1.300" />
    <path d="M16 13l2-8" stroke="#1479c9" strokeWidth="1.200" />
    <path d="M4 18h10" stroke="#f28a1c" strokeWidth="1.500" /><path d="M16 18h10" stroke="#1479c9" strokeWidth="1.500" />
  </svg>
);
const Mail = () => (
  <svg width="30" height="24" viewBox="0 0 30 24">
    <path d="M0 5l15-5 15 5v8H0z" fill="#11559c" />
    <path d="M3 3h24v10L15 19 3 13z" fill="#f0f0f0" />
    <path d="M0 5l30 19H1.500A1.500 1.500 0 0 1 0 22.500z" fill="#2eb6f0" />
    <path d="M30 5v17.500a1.500 1.500 0 0 1-1.500 1.500H1l17-11.500z" fill="#188ae0" />
  </svg>
);
const Netflix = () => (
  <svg width="12" height="22" viewBox="0 0 14 22" preserveAspectRatio="none">
    <path d="M0 0h4v21.500l-4 .5zM10 0h4v22l-4-.5z" fill="#b1060f" /><path d="M0 0h4.300L14 22l-4.300-.5z" fill="#e50914" />
  </svg>
);
const Telegram = () => (
  <svg width="27" height="27" viewBox="0 0 27 27">
    <circle cx="13.500" cy="13.500" r="13.300" fill="#229ed9" /><g transform="translate(4.500 6)"><FaTelegramPlane size={16} color="#fff" /></g>
  </svg>
);
const Chrome = () => (
  <svg width="30" height="30" viewBox="-15 -15 30 30">
    <path d="M-12.990 -7.500A15 15 0 0 1 12.990-7.500H0L-6.500 3.750z" fill="#e33b2e" />
    <path d="M12.990-7.500A15 15 0 0 1 0 15L6.500 3.750 0-7.500z" fill="#fcc934" />
    <path d="M0 15A15 15 0 0 1-12.990-7.500L-6.500 3.750 6.500 3.750z" fill="#2da94f" />
    <circle r="7.200" fill="#fff" /><circle r="5.700" fill="#3a7df0" />
  </svg>
);
const M365 = () => (
  <svg width="27" height="28" viewBox="0 0 27 28">
    <defs>
      <linearGradient id="m1" x1="0" y1="0" x2="0" y2="1"><stop stopColor="#8fb3f0" /><stop offset="1" stopColor="#4340a8" /></linearGradient>
      <linearGradient id="m2" x1="0" y1="1" x2="1" y2="0"><stop stopColor="#d08df5" /><stop offset="1" stopColor="#7b4fc8" /></linearGradient>
    </defs>
    <path d="M13.500 0L3 6C1 7.200.3 8.500.3 10.500V18c0 3 3 4.500 6 3l2-1V12c0-2 1-3.300 2.500-4l3.700-2z" fill="url(#m1)" />
    <path d="M13.500 0l10.700 6c1.800 1 2.600 2.500 2.600 4.500V20l-7.500-3.500V11c0-1.500-.8-2.300-2-3l-6-3.500z" fill="#45a8f2" />
    <path d="M1 20c2 2 4 2 7 .3l11-6V17l7.700-1.500V18c0 2-.9 3.400-2.700 4.500l-8 4.800c-1.600 1-3.400 1-5 0L3 22.500C2 22 1.300 21 1 20z" fill="url(#m2)" />
    <circle cx="13.500" cy="13" r="4.300" fill="#23261a" />
  </svg>
);
const Skype = () => (
  <svg width="28" height="28" viewBox="0 0 28 28">
    <rect x="0" y="0" width="17" height="17" rx="8" fill="#00b0f5" /><rect x="11" y="11" width="17" height="17" rx="8" fill="#0679c8" />
    <circle cx="14" cy="14" r="12.500" fill="#0797e5" />
    <text x="14" y="21" fontFamily="Open Sans" fontWeight="700" fontSize="19" textAnchor="middle" fill="#fff">S</text>
  </svg>
);
const Gt = () => (
  <svg width="30" height="27" viewBox="0 0 30 27" fontFamily="Open Sans" fontWeight="700" paintOrder="stroke" stroke="#fff" strokeWidth="2.500" strokeLinejoin="round">
    <text x="1" y="19" fontSize="25" fill="#3fb6c6">g</text><text x="17.500" y="21" fontSize="27" fill="#f5921e">t</text>
  </svg>
);
const Settings = () => (
  <svg width="30" height="28" viewBox="-15 -14 30 28">
    {[0, 60, 120].map((a) => <rect key={a} x="-3.800" y="-14" width="7.600" height="28" rx="1.500" fill="#7b858e" transform={`rotate(${a})`} />)}
    <circle r="10.500" fill="#7b858e" /><circle r="6.800" fill="#dfe8ef" /><circle r="5" fill="#1560b5" />
  </svg>
);
const Clock = () => (
  <svg width="30" height="30" viewBox="0 0 30 30">
    <path d="M0 14a15 14 0 0 1 30 0v16H0z" fill="#6c7883" /><circle cx="15" cy="15" r="12.300" fill="#f3f3f3" />
    <path d="M9.500 10.500L15 14.500l5-4.500" fill="none" stroke="#222" strokeWidth="2.600" /><path d="M15 15v10" stroke="#e0431c" strokeWidth="2.200" />
  </svg>
);
const VsCode = () => (
  <svg width="30" height="30" viewBox="0 0 30 30">
    <path d="M1 11l2.200-2L22 23v7L1 12.500z" fill="#0f7bc4" />
    <path d="M1 19l2.200 2.200L22 7V0L1 17.500z" fill="#1b8fdc" />
    <path d="M22 0l7 3a1.500 1.500 0 0 1 1 1.500v21a1.500 1.500 0 0 1-1 1.500l-7 3z" fill="#2ba6f3" />
  </svg>
);
const Keyboard = () => (
  <svg width="20" height="15" viewBox="0 0 20 15" fill="none" stroke="#fff" strokeWidth="1.400">
    <rect x=".8" y=".8" width="18.400" height="13.400" rx="2" /><path d="M4 4.500h12M4 7.500h12" strokeDasharray="1.600 1.800" /><path d="M5.500 11h9" />
  </svg>
);
const Battery = () => (
  <svg width="20" height="12" viewBox="0 0 20 12" fill="none" stroke="#fff" strokeWidth="1.300">
    <rect x=".7" y="1" width="16" height="10" rx="2.500" /><path d="M3 3.500h7v5H3z" fill="#fff" /><path d="M18.700 4v4" strokeWidth="1.600" />
  </svg>
);
const Pause = () => (
  <svg width="20" height="15" viewBox="0 0 20 15"><path d="M4 0h5v15H4zM12 0h5v15h-5z" fill="#fff" /></svg>
);

/* ---------- page ---------- */

const Globe = () => <MdPublic size={22} color="#9aa0a6" />;
const TABS_A = [Gmail, Calendar, Drive, Globe, Globe, Copper, Globe, Globe, Cube, () => <Alx c="#142b2c" />, Globe, Zoom, Opera, Gpt];
const TABS_B = [Brackets, Brackets, Brackets, Ubuntu, Globe, () => null, Bucket, Bucket];
const Hub = () => <FaGithub size={21} color="#fff" />;
const TABS_C = [Dynamo, Ses, Lambda, CloudWatch, Hub, Hub, Hub, Docs, Docs, Docs, Docs, Docs, () => <Alx c="#2d2d2f" />, GoogleDisc];

const INNER_TABS: { icon: React.ReactNode; title: string; w: number; tw: number; active?: boolean; line?: boolean; fade?: boolean }[] = [
  { icon: <FaYoutube size={19} color="#f00" />, title: "YouTube", w: 235.5, tw: 51, line: true },
  { icon: <Meet />, title: "Google Meet", w: 234.5, tw: 78 },
  { icon: <Burst />, title: "Untitled visualization | Flour", w: 235, tw: 163, active: true, fade: true },
  { icon: <Burst />, title: "Untitled Visualization | Flour", w: 234, tw: 165, line: true, fade: true },
  { icon: <MdPublic size={20} color="#5f6368" />, title: "Flourish template: Bar chart", w: 233.5, tw: 163, line: true, fade: true },
  { icon: <ChromeGrey />, title: "New Tab", w: 234, tw: 51, line: true },
];

const MENU_TOP: [string, number][] = [["Setup", 37], ["Colors", 40], ["Labels", 41], ["Counter & totalizer", 119], ["Timed captions", 97], ["Controls", 54], ["Legend", 46]];
const MENU_BOTTOM: [string, number][] = [["Annotations", 77], ["Timeline & animation", 135], ["Number formatting", 123]];

const MenuItem = ({ name, w }: { name: string; w: number }) => (
  <Section>
    <Caret />
    <Text width={w} size={13.2} bold={700} source color="#59666b">{name}</Text>
  </Section>
);

const APPS: { icon: React.ReactNode; dot?: boolean; on?: boolean; badge?: boolean }[] = [
  { icon: <TaskView /> }, { icon: <Copilot /> }, { icon: <Edge />, dot: true }, { icon: <Ledger /> }, { icon: <Folder />, dot: true },
  { icon: <Pc /> }, { icon: <Store /> }, { icon: <ControlPanel /> }, { icon: <Mail />, badge: true }, { icon: <Netflix /> },
  { icon: <Telegram /> }, { icon: <Chrome />, on: true }, { icon: <M365 /> }, { icon: <FaSpotify size={29} color="#1ed760" /> },
  { icon: <Skype /> }, { icon: <Gt /> }, { icon: <Settings />, dot: true }, { icon: <Clock />, dot: true }, { icon: <VsCode />, dot: true },
];

export default function App() {
  return (
    <Desktop>
      <Global />
      <TabStrip>
        <TabSearch><ChevronDown size={16} strokeWidth={3} /></TabSearch>
        {TABS_A.map((Icon, i) => <TabCell key={i} $w={43.75}><Icon /></TabCell>)}
        {TABS_B.map((Icon, i) => <TabCell key={i} $w={42.6} $line={i < 7}><Icon /></TabCell>)}
        <ActiveTab><MdClose size={17} /></ActiveTab>
        {TABS_C.map((Icon, i) => <TabCell key={i} $w={42.53}><Icon /></TabCell>)}
        <Slot $w={41} $color="#d5d5d5"><MdAdd size={20} /></Slot>
        <WindowButtons>
          <Slot $w={56}><Minus size={15} strokeWidth={1.800} /></Slot>
          <Slot $w={57}><Restore c="#fff" /></Slot>
          <Slot $w={58}><X size={20} strokeWidth={1.600} /></Slot>
        </WindowButtons>
      </TabStrip>
      <ToolbarBack>
        <Toolbar>
          <Slot $w={44} $color="#7e7e7e"><MdArrowBack size={21} /></Slot>
          <Slot $w={44} $color="#7e7e7e"><MdArrowForward size={21} /></Slot>
          <Slot $w={46}><MdRefresh size={23} /></Slot>
          <Omnibox>
            <SiteInfo><Tune /></SiteInfo>
            <Text width={1213} size={17} color="#c7c7c7">
              <Dim $c="#f2f2f2">lambda-dynamodb-destination-bucket.s3.us-east-1.amazonaws.com</Dim>/Avengers_Infinity_War/Movie_Videos/Avengers_Infinity_War.mp4?X-Amz-Algorithm=A...
            </Text>
            <Push><Slot $w={30}><MdStarBorder size={24} /></Slot></Push>
          </Omnibox>
          <Slot $w={67}><Abp /></Slot>
          <Slot $w={23}><Windows /></Slot>
          <Slot $w={66}><FastForward /></Slot>
          <Slot $w={25}><Honey /></Slot>
          <Slot $w={66}><StopHand /></Slot>
          <Slot $w={26}><MdOutlineExtension size={24} /></Slot>
          <Slot $w={39}><Divider $h={20} $c="#5f5f5f" /></Slot>
          <Slot $w={28}><MdQueueMusic size={25} /></Slot>
          <Slot $w={60}><Avatar>A</Avatar></Slot>
          <Slot $w={28}><MdMoreVert size={24} /></Slot>
        </Toolbar>
      </ToolbarBack>

      <Stage>
        <Video>
          <InnerStrip>
            {INNER_TABS.map((t, i) => (
              <InnerTab key={i} $w={t.w} $active={t.active} $line={t.line}>
                <Slot $w={22}>{t.icon}</Slot>
                <TabTitle $fade={t.fade}><Text width={t.tw} size={13.6} color="#55595e" lift={1}>{t.title}</Text></TabTitle>
                <MdClose size={16} />
              </InnerTab>
            ))}
            <Slot $w={48} $color="#3c4043"><MdAdd size={22} /></Slot>
            <WindowButtons>
              <Slot $w={50} $color="#333"><ChevronDown size={17} strokeWidth={1.500} /></Slot>
              <Slot $w={51} $color="#222"><Minus size={16} strokeWidth={1.800} /></Slot>
              <Slot $w={51}><Restore c="#222" w={1.500} /></Slot>
              <Slot $w={52} $color="#222"><X size={19} strokeWidth={1.600} /></Slot>
            </WindowButtons>
          </InnerStrip>

          <InnerBar>
            <Slot $w={34}><MdArrowBack size={21} /></Slot>
            <Slot $w={36} $color="#bcbec1"><MdArrowForward size={21} /></Slot>
            <Slot $w={37}><MdRefresh size={22} /></Slot>
            <InnerOmnibox>
              <Slot $w={20}><MdLock size={15} /></Slot>
              <Slot $w={8.5} />
              <Text width={332} size={15.5} color="#70757a">
                <Dim $c="#202124">app.flourish.studio</Dim>/visualisation/14864592/edit?
              </Text>
              <Push />
              <Slot $w={36}><GoogleDisc s={19} /></Slot>
              <Slot $w={36}><Share /></Slot>
              <Slot $w={36}><MdStarBorder size={21} /></Slot>
            </InnerOmnibox>
            <Slot $w={36}><Abp /></Slot>
            <Slot $w={36}><Windows /></Slot>
            <Slot $w={35}><FastForward /></Slot>
            <Slot $w={36}><Honey /></Slot>
            <Slot $w={36}><MdExtension size={20} /></Slot>
            <Slot $w={36}><SidePanel /></Slot>
            <Slot $w={36}><Avatar>A</Avatar></Slot>
            <Slot $w={35}><MdMoreVert size={21} /></Slot>
          </InnerBar>

          <Header>
            <HomeCell><FaHome size={20} /></HomeCell>
            <TitleBlock>
              <TitleLine><Text width={159} size={16.5} source color="#a3a3a3">Untitled visualization</Text></TitleLine>
              <Text width={86} size={12} source color="#a0a0a0">by Adrian quart</Text>
            </TitleBlock>
            <TitleMenu><ChevronDown size={18} strokeWidth={2} /></TitleMenu>
            <ButtonRow>
              <HeaderButton $w={144}><Presentation /><Text width={90} size={14} source color="#404040">Create a story</Text></HeaderButton>
              <HeaderButton $w={163} $dark><CloudUpload size={22} strokeWidth={1.600} /><Text width={107} size={14} bold={500} source color="#fff">Export &amp; publish</Text></HeaderButton>
            </ButtonRow>
          </Header>

          <SubBar>
            <SubLeft>
              <Slot $w={22}><Expand /></Slot>
              <Slot $w={17}><Divider $h={17} $c="#d2d2d2" /></Slot>
              <Slot $w={26}><Monitor /></Slot>
              <Slot $w={26}><Device w={10} h={12} /></Slot>
              <Slot $w={17}><Device w={7} h={11} /></Slot>
              <Slot $w={27}><FaCog size={12} /></Slot>
            </SubLeft>
            <Switch>
              <SwitchHalf $on><FaChartArea size={14} /><Text width={48} size={12.500} bold={700} source color="#fff">Preview</Text></SwitchHalf>
              <SwitchHalf><DataGrid /><Text width={26} size={12.500} source color="#666">Data</Text></SwitchHalf>
            </Switch>
            <SavedCell><FaCheck size={12} /><Text width={36} size={12.500} bold={700} source color="#a6a6a6">Saved</Text></SavedCell>
          </SubBar>

          <Body>
            <Margin $w={11} $c="#f8f8f8" />
            <ChartPane><Chart /></ChartPane>
            <Margin $w={6} $c="#ededed" />
            <Margin $w={62} $c="#f8f8f8" />
            <Sidebar>
              <TemplateCard>
                <TemplateText>
                  <Text width={101} size={13.2} source color="#555">Selected template</Text>
                  <TitlePair>
                    <Text width={109} size={16} bold={700} source color="#333">Bar chart race</Text>
                    <Text width={36} size={13} bold={700} source color="#333">15.2.2</Text>
                  </TitlePair>
                </TemplateText>
                <Thumbnail />
              </TemplateCard>
              {MENU_TOP.map(([name, w]) => <MenuItem key={name} name={name} w={w} />)}
              <Section $open>
                <Caret down />
                <Text width={26} size={13.200} bold={700} source color="#fff">Axis</Text>
              </Section>
              <Fields>
                <Field><Text width={58} size={13} source color="#444">Text color</Text><Swatch /></Field>
                <Field><Text width={50} size={13} source color="#444">Text size</Text><Input><Text width={8} size={14} source color="#222">1</Text></Input></Field>
                <Field><Text width={59} size={13} source color="#444">Line color</Text><Swatch $fill="#dedede" /></Field>
                <Field><Text width={57} size={13} source color="#444">Line dash</Text><Input /></Field>
              </Fields>
              <Scale>
                <Text width={35} size={11.500} bold={700} source color="#a0a0a0">SCALE</Text>
                <TypeLine><Text width={28} size={13.200} source color="#444">Type</Text><Question>?</Question></TypeLine>
                <Options>
                  <Option><Text width={54} size={13.200} source color="#444">Dynamic</Text></Option>
                  <Option $on><Text width={32} size={13.200} source color="#333">Fixed</Text></Option>
                  <Option><Text width={46} size={13.200} source color="#444">Custom</Text></Option>
                </Options>
              </Scale>
              {MENU_BOTTOM.map(([name, w]) => <MenuItem key={name} name={name} w={w} />)}
              <SearchLine>
                <Search size={18} strokeWidth={2.500} color="#333" />
                <Text width={108} size={14} source color="#888">Search for setting</Text>
              </SearchLine>
            </Sidebar>
            <ScrollTrack><ScrollArrow /><ScrollThumb /></ScrollTrack>
          </Body>

          <HelpBubble>?</HelpBubble>
          <Shade />
          <Controls>
            <ControlRow>
              <Pause />
              <Time>0:06 / 0:53</Time>
              <Push />
              <Slot $w={24}><MdVolumeUp size={25} /></Slot>
              <Slot $w={97}><MdFullscreen size={26} /></Slot>
              <Slot $w={22}><MdMoreVert size={25} /></Slot>
            </ControlRow>
            <Track>
              <TrackPart $c="#fff" style={{ width: "12.15%" }} />
              <TrackPart $c="#b2b2b2" style={{ width: "17.95%" }} />
            </Track>
          </Controls>
        </Video>
      </Stage>

      <Taskbar>
        <Start />
        <SearchPill>
          <Search size={18} strokeWidth={2} />
          <Text width={45} size={14.500} color="#fff">Search</Text>
        </SearchPill>
        {APPS.map((a, i) => (
          <TaskItem key={i} $on={a.on}>
            {a.icon}
            {a.badge && <Badge>99+</Badge>}
            {a.on && <Initial>A</Initial>}
            {a.on && <Running $w={20} $c="#cf9ae0" />}
            {a.dot && <Running $w={8} $c="#9a9a9a" />}
          </TaskItem>
        ))}
        <Tray>
          <Slot $w={39}><ChevronUp size={18} strokeWidth={2} /></Slot>
          <Slot $w={42}><Keyboard /></Slot>
          <Stack $w={56}>
            <Text width={31} size={13.500} color="#fff">ENG</Text>
            <Text width={18} size={13.500} color="#fff">US</Text>
          </Stack>
          <Slot $w={37}><MdWifi size={20} /></Slot>
          <Slot $w={20}><MdOutlineVolumeUp size={20} /></Slot>
          <Slot $w={44}><Battery /></Slot>
          <Stack $w={86} $end>
            <Text width={62} size={13.800} color="#fff">12:22 pm</Text>
            <Text width={78} size={13.800} color="#fff">02/02/2025</Text>
          </Stack>
        </Tray>
      </Taskbar>
    </Desktop>
  );
}
